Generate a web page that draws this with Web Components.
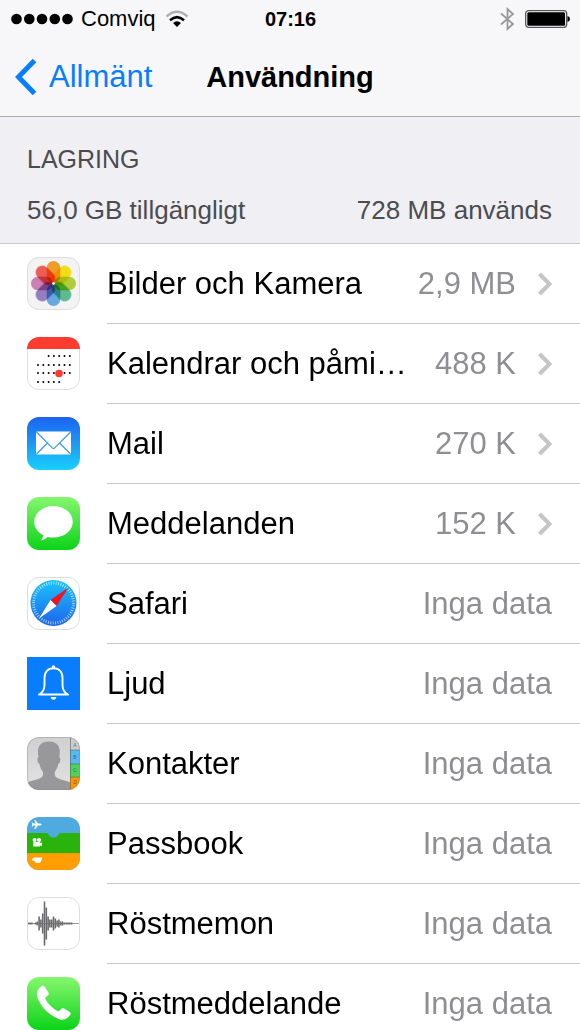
<!DOCTYPE html>
<html lang="sv">
<head>
<meta charset="utf-8">
<meta name="viewport" content="width=device-width, initial-scale=1">
<title>Användning</title>
<style>
    body {
        margin: 0;
        font-family: "Liberation Sans", Arial, sans-serif;
        color: #000;
        background-color: #fff;
    }
</style>
</head>
<body>
<settings-page>
    <status-bar slot="top" carrier="Comviq" time="07:16"></status-bar>
    <nav-bar slot="top" back="Allmänt">Användning</nav-bar>
    <storage-header>
        LAGRING
        <span slot="free">56,0 GB tillgängligt</span>
        <span slot="used">728 MB används</span>
    </storage-header>
    <usage-list>
        <usage-item icon="photos" value="2,9 MB" link>Bilder och Kamera</usage-item>
        <usage-item icon="calendar" value="488 K" link>Kalendrar och påmi…</usage-item>
        <usage-item icon="mail" value="270 K" link>Mail</usage-item>
        <usage-item icon="messages" value="152 K" link>Meddelanden</usage-item>
        <usage-item icon="safari" value="Inga data">Safari</usage-item>
        <usage-item icon="sounds" value="Inga data">Ljud</usage-item>
        <usage-item icon="contacts" value="Inga data">Kontakter</usage-item>
        <usage-item icon="passbook" value="Inga data">Passbook</usage-item>
        <usage-item icon="memos" value="Inga data">Röstmemon</usage-item>
        <usage-item icon="phone" value="Inga data">Röstmeddelande</usage-item>
    </usage-list>
</settings-page>

<script>
// eight petals, clockwise from the top
const petals = ['#fba52c', '#fbe914', '#b9d93c', '#66c294', '#6ab2e8', '#9b84c9', '#d685bb', '#f9605a']
    .map((color, i) => `<rect x="19.7" y="4" width="13.6" height="22" rx="6.8" fill="${color}" transform="rotate(${i * 45} 26.5 26.5)"/>`)
    .join('');

// [y, first column, last column]
const days = [[19, 2, 6], [28, 0, 6], [36, 0, 6], [45, 0, 4]]
    .map(([y, from, to]) => {
        let row = '';
        for (let i = from; i <= to; i++) {
            row += `<circle cx="${11 + i * 5.3}" cy="${y}" r="1"/>`;
        }
        return row;
    })
    .join('');

// half heights of the wave, left to right
const wave = [1, 1, 1, 0, 1, 2, 7, 4, 10, 22, 16, 7, 4, 4, 7, 5, 3, 4, 2, 2, 1, 1, 1, 1, 1]
    .map((h, i) => `<rect x="${(0.5 + i * 1.8).toFixed(1)}" y="${26.5 - h}" width="1.6" height="${h * 2}"/>`)
    .join('');

const frame = '<rect x="0.5" y="0.5" width="52" height="52" rx="11.5" fill="none" stroke="#dedede"/>';

const icons = {
    photos: `
        <rect width="53" height="53" rx="12" fill="#f3f3f4"/>
        <g class="petals">${petals}</g>
        <circle cx="26.5" cy="26.5" r="1.3" fill="#fff"/>${frame}`,
    calendar: `
        <rect width="53" height="53" rx="12" fill="#fff"/>
        <path d="M0 12A12 12 0 0 1 12 0H41A12 12 0 0 1 53 12Z" fill="#ff3b30"/>
        ${days}
        <circle cx="32" cy="36.5" r="3.8" fill="#ff3b30"/>
        <path d="M.5 12V41A11.5 11.5 0 0 0 12 52.5H41A11.5 11.5 0 0 0 52.5 41V12" fill="none" stroke="#dedede"/>`,
    mail: `
        <linearGradient id="g" x2="0" y2="1"><stop stop-color="#1d62f0"/><stop offset="1" stop-color="#1ad0fb"/></linearGradient>
        <rect width="53" height="53" rx="12" fill="url(#g)"/>
        <rect x="9" y="14.5" width="35" height="23" rx="1.2" fill="#fff"/>
        <path d="M9.5 15L25 30.6Q26.5 32 28 30.6L43.5 15M9.5 37L20.5 26M43.5 37L32.5 26" fill="none" stroke="#2f97f5" stroke-width="1.1"/>`,
    messages: `
        <linearGradient id="g" x2="0" y2="1"><stop stop-color="#86f76f"/><stop offset="1" stop-color="#0bd318"/></linearGradient>
        <rect width="53" height="53" rx="12" fill="url(#g)"/>
        <path d="M26.5 9C37 9 45.8 15.8 45.8 24.8S37 40.6 26.5 40.6C24.4 40.6 22.4 40.4 20.6 39.9C18.8 41.7 16.5 43 13.8 43.2C15.2 42 16 40 16.2 38.2C10.8 35.4 7.2 30.4 7.2 24.8C7.2 15.8 16 9 26.5 9Z" fill="#fff"/>`,
    safari: `
        <linearGradient id="g" x2="0" y2="1"><stop stop-color="#1bc4fa"/><stop offset="1" stop-color="#1d64ef"/></linearGradient>
        <rect width="53" height="53" rx="12" fill="#fff"/>
        <circle cx="26.5" cy="26" r="23" fill="url(#g)"/>
        <circle cx="26.5" cy="26" r="20" fill="none" stroke="#fff" stroke-opacity="0.75" stroke-width="3" stroke-dasharray="0.8 1.6"/>
        <path d="M41.5 10.5L23.5 23L29.5 29Z" fill="#f0141e"/>
        <path d="M12 41.5L23.5 23L29.5 29Z" fill="#fff"/>${frame}`,
    sounds: `
        <rect width="53" height="53" fill="#087eff"/>
        <path d="M12 37.5C16.5 35.5 17.5 32.5 17.5 27.5V21C17.5 14.8 21 11.3 26.5 11.3S35.5 14.8 35.5 21V27.5C35.5 32.5 36.5 35.5 41 37.5Z" fill="none" stroke="#fff" stroke-width="1.9" stroke-linejoin="round"/>
        <circle cx="26.5" cy="10" r="1.7" fill="#fff"/>
        <path d="M23.7 40H29.3Q29 42.8 26.5 42.8T23.7 40Z" fill="#fff"/>`,
    contacts: `
        <clipPath id="c"><rect width="53" height="53" rx="12"/></clipPath>
        <linearGradient id="g" x2="0" y2="1"><stop stop-color="#d0d0d1"/><stop offset="1" stop-color="#e2e2e3"/></linearGradient>
        <g clip-path="url(#c)">
            <rect width="53" height="53" fill="url(#g)"/>
            <path d="M0 53V46C3 43.5 8.5 43.3 13 41.2C15.6 40 16.4 38.5 16 35C14 32.5 13 30 12.6 27C10.8 26.5 10.3 23.5 10.5 21.5C10.6 20.5 11 20.3 11.5 20.2C9.5 10 13 4.5 21.8 4.5S34.3 10 32.3 20.2C33.3 20.5 33.5 21.5 33.3 23C33 25 32.5 26.7 31.2 27C30.8 30 29.6 32.5 27.8 35C27.4 38.5 28.2 40 30.8 41.2C35 43.2 40 43.5 43 45.5V53Z" fill="#98989a"/>
            <path d="M43 0H53V13H43Z" fill="#ccccce"/>
            <path d="M43 13H53V27H43Z" fill="#56baf2"/>
            <path d="M43 27H53V40H43Z" fill="#4cd35c"/>
            <path d="M43 40H53V53H43Z" fill="#ff9505"/>
            <path d="M43.5 0V53M43 13H53M43 27H53M43 40H53" stroke="#555" stroke-opacity="0.65" stroke-width="0.8" fill="none"/>
            <g font-size="5" fill="#444" fill-opacity="0.75" text-anchor="middle">
                <text x="48" y="10">A</text><text x="48" y="22">B</text>
                <text x="48" y="35">C</text><text x="48" y="47">D</text>
            </g>
        </g>
        <rect x="0.5" y="0.5" width="52" height="52" rx="11.5" fill="none" stroke="#888" stroke-opacity="0.4"/>`,
    passbook: `
        <clipPath id="c"><rect width="53" height="53" rx="12"/></clipPath>
        <g clip-path="url(#c)">
            <rect width="53" height="53" fill="#4faadf"/>
            <path d="M0 16H20C21.5 16 21.5 20.5 26.5 20.5S31.5 16 33 16H53V37H0Z" fill="#2ab30d"/>
            <path d="M0 36H53V53H0Z" fill="#ff9d05"/>
            <path d="M0 35.8H53" stroke="#2ab30d" stroke-dasharray="1 1"/>
        </g>
        <g fill="#fff">
            <path d="M14.5 7.5C14.5 8.2 13.7 8.4 12.8 8.4H11L8.4 12H7.3L8.6 8.4H6.4L5.5 9.6H4.7L5.3 7.5L4.7 5.4H5.5L6.4 6.6H8.6L7.3 3H8.4L11 6.6H12.8C13.7 6.6 14.5 6.8 14.5 7.5Z"/>
            <circle cx="7.6" cy="23" r="2"/><circle cx="12" cy="23" r="2"/>
            <path d="M6.3 25H12.8V26.2L15 25.2V29.2L12.8 28.2V29.4H6.3Z"/>
            <path d="M7 40.6H15C15 44 13.5 45.6 12.5 46H9.7C8.5 45.7 7.7 44.7 7.3 43.7H6.3Q5 43.5 5 42.2Q5.2 41.2 7 41.4Z"/>
        </g>`,
    memos: `
        <rect width="53" height="53" rx="12" fill="#fff"/>
        <path d="M0 26.5H53" stroke="#999"/>
        <g fill="#6a6a6c">${wave}</g>${frame}`,
    phone: `
        <linearGradient id="g" x2="0" y2="1"><stop stop-color="#86f76f"/><stop offset="1" stop-color="#0bd318"/></linearGradient>
        <rect width="53" height="53" rx="12" fill="url(#g)"/>
        <path d="M14.8 9C16 8.4 17 8.7 17.8 9.8L21.4 15.4C22 16.6 21.8 17.6 20.8 18.4L19.2 19.8C18.2 20.6 18.1 21.5 18.7 22.6C21.4 27.2 25.4 31.1 30.1 33.8C31.2 34.4 32.1 34.3 32.8 33.5L34.2 31.9C35 30.9 36 30.7 37.2 31.4L42.8 35C43.8 35.7 44 36.6 43.4 37.6C40.5 42.4 36.5 43.9 31.5 41.9C21.8 37.8 14.4 30.4 10.6 21.2C8.8 16.2 10.5 11.6 14.8 9Z" fill="#fff"/>`
};

class SettingsPage extends HTMLElement {
    constructor() {
        super();
        this.$shadow = this.attachShadow({ mode: 'open' });
    }

    connectedCallback() {
        this.$shadow.innerHTML = `
            <style>
                :host {
                    display: flex;
                    flex-direction: column;
                    height: 100vh;
                }
                header {
                    flex: none;
                    background-color: #f7f7f9;
                    border-bottom: 1px solid #acacb0;
                }
                main {
                    flex: 1;
                    min-height: 0;
                    overflow-y: auto;
                    scrollbar-width: none;
                }
            </style>
            <header><slot name="top"></slot></header>
            <main><slot></slot></main>
        `;
    }
}

class StatusBar extends HTMLElement {
    constructor() {
        super();
        this.$shadow = this.attachShadow({ mode: 'open' });
    }

    connectedCallback() {
        this.$shadow.innerHTML = `
            <style>
                :host {
                    display: grid;
                    grid-template-columns: 1fr auto 1fr;
                    align-items: center;
                    height: 38px;
                    padding: 0 10px 0 11px;
                }
                .left, .right {
                    display: flex;
                    align-items: center;
                }
                .left {
                    gap: 8px;
                    font-size: 22px;
                }
                .right {
                    justify-content: flex-end;
                    gap: 10px;
                }
                .time {
                    font-size: 20px;
                    font-weight: bold;
                }
                svg {
                    display: block;
                }
            </style>
            <div class="left">
                <svg width="62" height="12" viewBox="0 0 62 12">
                    <circle cx="5.5" cy="6" r="5.3"/><circle cx="18.3" cy="6" r="5.3"/><circle cx="31" cy="6" r="5.3"/>
                    <circle cx="43.8" cy="6" r="5.3"/><circle cx="56.5" cy="6" r="5.3"/>
                </svg>
                <span>${this.getAttribute('carrier')}</span>
                <svg width="26" height="18" viewBox="0 0 26 18" fill="none" stroke-width="2.5">
                    <path d="M2.5 6.5Q13 -3 23.5 6.5" stroke="#b0b0b2"/>
                    <path d="M6 10.3Q13 4 20 10.3" stroke="#000"/>
                    <path d="M9 13Q13 9.5 17 13L13 17Z" fill="#000"/>
                </svg>
            </div>
            <span class="time">${this.getAttribute('time')}</span>
            <div class="right">
                <svg width="16" height="24" viewBox="0 0 16 24" fill="none" stroke="#98989a" stroke-width="1.8">
                    <path d="M2 6.5L14 17L8.5 22V2L14 7L2 17.5"/>
                </svg>
                <svg width="45" height="18" viewBox="0 0 45 18">
                    <rect x="0.7" y="0.7" width="41" height="16.6" rx="3" fill="#fff" stroke="#555" stroke-width="1.3"/>
                    <rect x="2.3" y="2.3" width="37.8" height="13.4" rx="1.5"/>
                    <path d="M42.5 6Q45 6.5 45 9T42.5 12Z"/>
                </svg>
            </div>
        `;
    }
}

class NavBar extends HTMLElement {
    constructor() {
        super();
        this.$shadow = this.attachShadow({ mode: 'open' });
    }

    connectedCallback() {
        this.$shadow.innerHTML = `
            <style>
                :host {
                    display: grid;
                    grid-template-columns: 1fr auto 1fr;
                    align-items: center;
                    height: 78px;
                    padding: 0 14px;
                }
                a {
                    display: flex;
                    align-items: center;
                    gap: 12px;
                    justify-self: start;
                    color: #087eff;
                    font-size: 31px;
                    text-decoration: none;
                }
                h1 {
                    margin: 0;
                    font-size: 29px;
                }
            </style>
            <a href="#">
                <svg width="23" height="38" viewBox="0 0 23 38" fill="none" stroke="currentColor" stroke-width="5">
                    <path d="M20.5 2.5L4.5 19L20.5 35.5"/>
                </svg>
                <span>${this.getAttribute('back')}</span>
            </a>
            <h1><slot></slot></h1>
        `;
    }
}

class StorageHeader extends HTMLElement {
    constructor() {
        super();
        this.$shadow = this.attachShadow({ mode: 'open' });
    }

    connectedCallback() {
        this.$shadow.innerHTML = `
            <style>
                :host {
                    display: block;
                    padding: 27px 28px 18px 27px;
                    background-color: #efeff4;
                    border-bottom: 1px solid #c8c7cc;
                    color: #4c4c50;
                    font-size: 26px;
                    line-height: 30px;
                }
                h2 {
                    margin: 0 0 21px;
                    font-size: 25px;
                    font-weight: normal;
                }
                .totals {
                    display: flex;
                    justify-content: space-between;
                }
            </style>
            <h2><slot></slot></h2>
            <div class="totals">
                <slot name="free"></slot>
                <slot name="used"></slot>
            </div>
        `;
    }
}

class UsageList extends HTMLElement {
    constructor() {
        super();
        this.$shadow = this.attachShadow({ mode: 'open' });
    }

    connectedCallback() {
        this.setAttribute('role', 'list');
        this.$shadow.innerHTML = `
            <style>
                :host {
                    display: block;
                    background-color: #fff;
                }
            </style>
            <slot></slot>
        `;
    }
}

class AppIcon extends HTMLElement {
    constructor() {
        super();
        this.$shadow = this.attachShadow({ mode: 'open' });
    }

    connectedCallback() {
        this.$shadow.innerHTML = `
            <style>
                :host {
                    display: block;
                    flex: none;
                }
                svg {
                    display: block;
                }
                .petals rect {
                    mix-blend-mode: multiply;
                }
            </style>
            <svg width="53" height="53" viewBox="0 0 53 53" aria-hidden="true">${icons[this.getAttribute('name')]}</svg>
        `;
    }
}

class UsageItem extends HTMLElement {
    constructor() {
        super();
        this.$shadow = this.attachShadow({ mode: 'open' });
    }

    connectedCallback() {
        this.setAttribute('role', 'listitem');
        this.link = this.hasAttribute('link');
        this.render();
    }

    showChevron() {
        if (this.link) {
            return `
                <svg width="16" height="24" viewBox="0 0 16 24" fill="none" stroke="#c4c4c9" stroke-width="4">
                    <path d="M3.5 2L13.5 12L3.5 22"/>
                </svg>`;
        }

        return '';
    }

    render() {
        const tag = this.link ? 'a href="#"' : 'div';

        this.$shadow.innerHTML = `
            <style>
                :host {
                    display: block;
                }
                .row {
                    display: flex;
                    align-items: center;
                    gap: 27px;
                    padding-left: 27px;
                    color: inherit;
                    font-size: 31px;
                    text-decoration: none;
                }
                app-icon {
                    margin-bottom: 2px;
                }
                .body {
                    display: flex;
                    flex: 1;
                    align-items: center;
                    gap: 20px;
                    min-width: 0;
                    height: 79px;
                    padding-right: 28px;
                    border-bottom: 1px solid #c8c7cc;
                }
                .name {
                    flex: 1;
                    overflow: hidden;
                    text-overflow: ellipsis;
                    white-space: nowrap;
                }
                .value {
                    color: #8e8e93;
                    white-space: nowrap;
                }
            </style>
            <${tag} class="row">
                <app-icon name="${this.getAttribute('icon')}"></app-icon>
                <div class="body">
                    <span class="name"><slot></slot></span>
                    <span class="value">${this.getAttribute('value')}</span>
                    ${this.showChevron()}
                </div>
            </${this.link ? 'a' : 'div'}>
        `;
    }
}

window.customElements.define('settings-page', SettingsPage);
window.customElements.define('status-bar', StatusBar);
window.customElements.define('nav-bar', NavBar);
window.customElements.define('storage-header', StorageHeader);
window.customElements.define('usage-list', UsageList);
window.customElements.define('app-icon', AppIcon);
window.customElements.define('usage-item', UsageItem);
</script>
</body>
</html>
